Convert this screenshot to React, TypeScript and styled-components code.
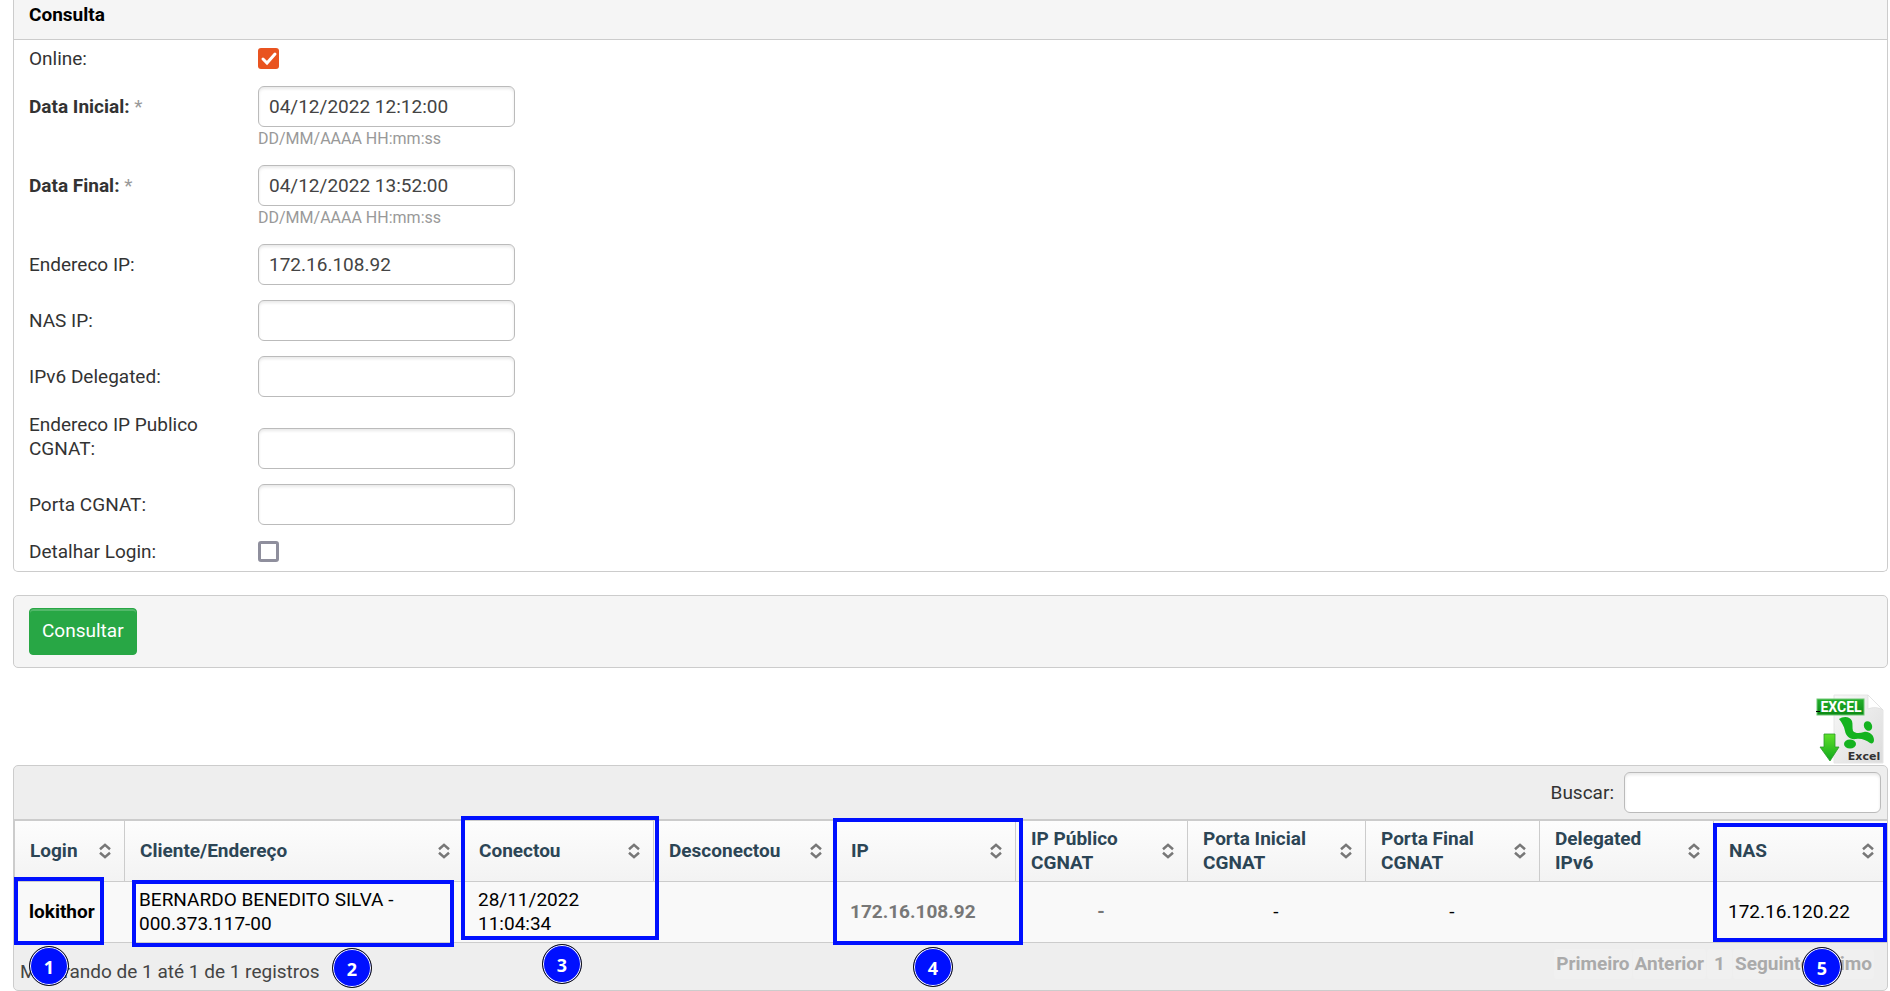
import React from 'react';
import styled, { createGlobalStyle, css } from 'styled-components';

const Global = createGlobalStyle`
  *, *::before, *::after { box-sizing: border-box; }
  body {
    margin: 0;
    background: #fff;
    color: #333;
    font-family: Roboto, "Liberation Sans", sans-serif;
    font-size: 19px;
    line-height: 24px;
  }
`;

const Page = styled.main`
  padding: 0 2px 0 13px;
`;

const Panel = styled.section`
  border: 1px solid #ccc;
  border-top: 0;
  border-radius: 0 0 5px 5px;
`;

const PanelTitle = styled.h2`
  margin: 0;
  padding: 3px 15px 12px;
  border-bottom: 1px solid #ccc;
  background: #f5f5f5;
  color: #000;
  font-size: 19px;
  line-height: 24px;
  font-weight: 700;
`;

const Field = styled.div`
  display: grid;
  grid-template-columns: 229px 257px;
  align-items: end;
  padding: 7px 15px 8px;
`;

const CheckField = styled(Field)`
  align-items: start;

  &:last-child {
    padding-bottom: 7px;
  }
`;

const Label = styled.label<{ $required?: boolean }>`
  max-width: 200px;
  padding: 1px 0 8px;
  font-weight: ${(p) => (p.$required ? 700 : 400)};

  ${CheckField} & {
    padding: 0;
  }
`;

const Star = styled.span`
  color: #999;
  font-weight: 400;
`;

const TextInput = styled.input`
  width: 257px;
  height: 41px;
  padding: 0 10px;
  border: 1px solid #bbb;
  border-radius: 6px;
  background: #fff;
  box-shadow: inset 0 2px 3px rgba(0, 0, 0, 0.09);
  color: #444;
  font: inherit;
  outline: 0;
`;

const Hint = styled.small`
  grid-column: 2;
  height: 23px;
  color: #999;
  font-size: 16px;
  line-height: 24px;
`;

const CheckBox = styled.input`
  appearance: none;
  width: 21px;
  height: 21px;
  margin: 1px 0;
  border: 3px solid #8f8f9d;
  border-radius: 3px;
  background: #fff;

  &:checked {
    border: 0;
    background: #e95420
      url("data:image/svg+xml,%3Csvg xmlns='http://www.w3.org/2000/svg' viewBox='0 0 21 21'%3E%3Cpath d='M5 11l4 4 8-9' fill='none' stroke='white' stroke-width='3' stroke-linecap='round'/%3E%3C/svg%3E");
  }
`;

const Actions = styled.div`
  margin-top: 23px;
  padding: 12px 15px;
  border: 1px solid #ccc;
  border-radius: 5px;
  background: #f5f5f5;
`;

const SubmitButton = styled.button`
  display: block;
  height: 47px;
  padding: 0 12px 1px;
  border: 1px solid #28a745;
  border-radius: 4px;
  background: #28a745;
  box-shadow: inset 0 2px 0 rgba(255, 255, 255, 0.2);
  color: #fff;
  font: inherit;
`;

const ExportBar = styled.div`
  display: flex;
  justify-content: flex-end;
  padding: 26px 4px 1px;
`;

const ExportLink = styled.a`
  display: block;
  height: 70px;
`;

const Results = styled.section`
  border: 1px solid #ccc;
  border-radius: 5px;
  background: #eee;
`;

const Toolbar = styled.div`
  display: flex;
  justify-content: flex-end;
  align-items: center;
  gap: 10px;
  padding: 6px;
  border-bottom: 1px solid #ccc;
`;

const Table = styled.table`
  width: 100%;
  border-collapse: separate;
  border-spacing: 0;
  table-layout: fixed;
  color: #000;
`;

const HeadCell = styled.th`
  height: 62px;
  padding: 6px 13px 6px 15px;
  border: solid #ccc;
  border-width: 1px 0 1px 1px;
  background: linear-gradient(#fdfdfd, #f3f3f3);
  color: #2c4555;
  font-weight: 700;
  text-align: left;
`;

const HeadContent = styled.div`
  display: flex;
  align-items: center;
  justify-content: space-between;
`;

const HeadText = styled.span`
  white-space: pre-line;
`;

const Cell = styled.td<{ $tone?: 'strong' | 'muted'; $center?: boolean }>`
  position: relative;
  height: 61px;
  padding: 6px 15px;
  border-bottom: 1px solid #ccc;
  background: #f9f9f9;
  white-space: pre-line;
  text-align: ${(p) => (p.$center ? 'center' : 'left')};
  ${(p) => p.$tone === 'strong' && css`font-weight: 700;`}
  ${(p) => p.$tone === 'muted' && css`font-weight: 700; color: #777;`}
`;

const Outline = styled.span<{ $inset: string }>`
  position: absolute;
  z-index: 1;
  inset: ${(p) => p.$inset};
  border: 4px solid #0010ff;
  pointer-events: none;
`;

const Badge = styled.span<{ $left: number; $top: number }>`
  position: absolute;
  z-index: 2;
  left: ${(p) => p.$left}px;
  top: ${(p) => p.$top}px;
  width: 40px;
  height: 40px;
  border: 1px solid #111;
  border-radius: 50%;
  background: #0010ff;
  box-shadow: inset 0 0 0 1px #fff;
  color: #fff;
  font: 700 18px/41px "Open Sans", "Noto Sans", sans-serif;
  text-align: center;
`;

const Footer = styled.div`
  display: flex;
  justify-content: space-between;
  align-items: flex-start;
  height: 47px;
  padding: 6px 13px 0 6px;
  color: #444;
`;

const Info = styled.span`
  padding-top: 11px;
`;

const Pager = styled.nav`
  display: flex;
  gap: 1px;
`;

const PageButton = styled.button<{ $number: boolean }>`
  height: 30px;
  padding: 0 ${(p) => (p.$number ? 7 : 2)}px;
  border: 0;
  border-radius: 3px;
  background: #f0f0f0;
  color: #aaa;
  font: inherit;
  font-weight: 700;
`;

const SortIcon = () => (
  <svg width="12" height="16" viewBox="0 0 12 16" fill="none" stroke="#777" strokeWidth="2.5" aria-hidden="true">
    <path d="M1 6.2L6 1.8l5 4.4M1 9.8l5 4.4 5-4.4" />
  </svg>
);

const ExcelIcon = () => (
  <svg width="68" height="70" viewBox="0 0 68 70" role="img" aria-label="Excel">
    <defs>
      <linearGradient id="paper" x1="0" y1="0" x2="1" y2="1">
        <stop offset="0" stopColor="#f8f8f8" />
        <stop offset="1" stopColor="#dcdcdc" />
      </linearGradient>
      <linearGradient id="tag" x1="0" y1="0" x2="0" y2="1">
        <stop offset="0" stopColor="#23b02b" />
        <stop offset="1" stopColor="#0c8a14" />
      </linearGradient>
      <linearGradient id="arrow" x1="0" y1="0" x2="0" y2="1">
        <stop offset="0" stopColor="#5fe02a" />
        <stop offset="1" stopColor="#0fa81c" />
      </linearGradient>
    </defs>
    <path d="M18 1h34l15 15v53H18z" fill="url(#paper)" stroke="#e6e6e6" />
    <path d="M52 1l15 15c-5-3-10-3-15-1z" fill="#fff" stroke="#ddd" strokeWidth="0.7" />
    <path d="M23 25c4-3 11-3 13 2 1 3 0 7 1 10 3 3 7 2 11 1 5-1 10 3 10 8 0 3-2 4-4 3-4-3-9-5-14-4-6 1-10-3-11-8-1-5-3-8-6-12z" fill="#14b31f" />
    <ellipse cx="52" cy="32" rx="4" ry="5" transform="rotate(-25 52 32)" fill="#14b31f" />
    <ellipse cx="34" cy="50" rx="6" ry="4.5" fill="#14b31f" />
    <path d="M8 40h11v13h4L14 67 4 53h4z" fill="url(#arrow)" stroke="#2a9a2a" strokeWidth="0.8" />
    <rect x="1" y="5" width="47" height="16" fill="url(#tag)" stroke="#6fc774" />
    <text x="25" y="18" textAnchor="middle" fill="#fff" fontFamily="Roboto, sans-serif" fontWeight="700" fontSize="14">EXCEL</text>
    <text x="48" y="66" textAnchor="middle" fill="#333" fontFamily="DejaVu Sans, sans-serif" fontWeight="700" fontSize="11">Excel</text>
    <path d="M0 17.5h4" stroke="#000" />
  </svg>
);

const COLUMNS = [
  { title: 'Login', width: 110 },
  { title: 'Cliente/Endereço', width: 339 },
  { title: 'Conectou', width: 190 },
  { title: 'Desconectou', width: 182 },
  { title: 'IP', width: 180 },
  { title: 'IP Público\nCGNAT', width: 172 },
  { title: 'Porta Inicial\nCGNAT', width: 178 },
  { title: 'Porta Final\nCGNAT', width: 174 },
  { title: 'Delegated\nIPv6', width: 174 },
  { title: 'NAS', width: 174 },
];

const PAGES = ['Primeiro', 'Anterior', '1', 'Seguinte', 'Último'];

interface TextFieldProps {
  id: string;
  label: string;
  value?: string;
  required?: boolean;
  hint?: string;
}

const TextField = ({ id, label, value = '', required, hint }: TextFieldProps) => (
  <Field>
    <Label htmlFor={id} $required={required}>
      {label}:{required && <Star> *</Star>}
    </Label>
    <TextInput id={id} type="text" defaultValue={value} />
    {hint && <Hint>{hint}</Hint>}
  </Field>
);

export default function App() {
  return (
    <>
      <Global />
      <Page>
        <Panel>
          <PanelTitle>Consulta</PanelTitle>
          <CheckField>
            <Label htmlFor="online">Online:</Label>
            <CheckBox id="online" type="checkbox" defaultChecked />
          </CheckField>
          <TextField id="inicio" label="Data Inicial" value="04/12/2022 12:12:00" required hint="DD/MM/AAAA HH:mm:ss" />
          <TextField id="fim" label="Data Final" value="04/12/2022 13:52:00" required hint="DD/MM/AAAA HH:mm:ss" />
          <TextField id="ip" label="Endereco IP" value="172.16.108.92" />
          <TextField id="nas" label="NAS IP" />
          <TextField id="ipv6" label="IPv6 Delegated" />
          <TextField id="cgnat-ip" label="Endereco IP Publico CGNAT" />
          <TextField id="cgnat-porta" label="Porta CGNAT" />
          <CheckField>
            <Label htmlFor="detalhar">Detalhar Login:</Label>
            <CheckBox id="detalhar" type="checkbox" />
          </CheckField>
        </Panel>

        <Actions>
          <SubmitButton type="button">Consultar</SubmitButton>
        </Actions>

        <ExportBar>
          <ExportLink href="#excel">
            <ExcelIcon />
          </ExportLink>
        </ExportBar>

        <Results>
          <Toolbar>
            <label htmlFor="buscar">Buscar:</label>
            <TextInput id="buscar" type="text" />
          </Toolbar>
          <Table>
            <colgroup>
              {COLUMNS.map((c) => (
                <col key={c.title} width={c.width} />
              ))}
            </colgroup>
            <thead>
              <tr>
                {COLUMNS.map((c) => (
                  <HeadCell key={c.title} scope="col">
                    <HeadContent>
                      <HeadText>{c.title}</HeadText>
                      <SortIcon />
                    </HeadContent>
                  </HeadCell>
                ))}
              </tr>
            </thead>
            <tbody>
              <tr>
                <Cell $tone="strong">
                  lokithor
                  <Outline $inset="-5px 20px -3px 0" />
                  <Badge $left={15} $top={64}>1</Badge>
                </Cell>
                <Cell>
                  {'BERNARDO BENEDITO SILVA -\n000.373.117-00'}
                  <Outline $inset="-2px 9px -5px 8px" />
                  <Badge $left={208} $top={66}>2</Badge>
                </Cell>
                <Cell>
                  {'28/11/2022\n11:04:34'}
                  <Outline $inset="-66px -6px 2px -2px" />
                  <Badge $left={79} $top={62}>3</Badge>
                </Cell>
                <Cell />
                <Cell $tone="muted">
                  172.16.108.92
                  <Outline $inset="-64px -8px -3px -2px" />
                  <Badge $left={78} $top={65}>4</Badge>
                </Cell>
                <Cell $tone="muted" $center>-</Cell>
                <Cell $center>-</Cell>
                <Cell $center>-</Cell>
                <Cell />
                <Cell>
                  172.16.120.22
                  <Outline $inset="-59px 0 0 0" />
                  <Badge $left={89} $top={65}>5</Badge>
                </Cell>
              </tr>
            </tbody>
          </Table>
          <Footer>
            <Info>Mostrando de 1 até 1 de 1 registros</Info>
            <Pager>
              {PAGES.map((p) => (
                <PageButton key={p} type="button" $number={p === '1'}>{p}</PageButton>
              ))}
            </Pager>
          </Footer>
        </Results>
      </Page>
    </>
  );
}
